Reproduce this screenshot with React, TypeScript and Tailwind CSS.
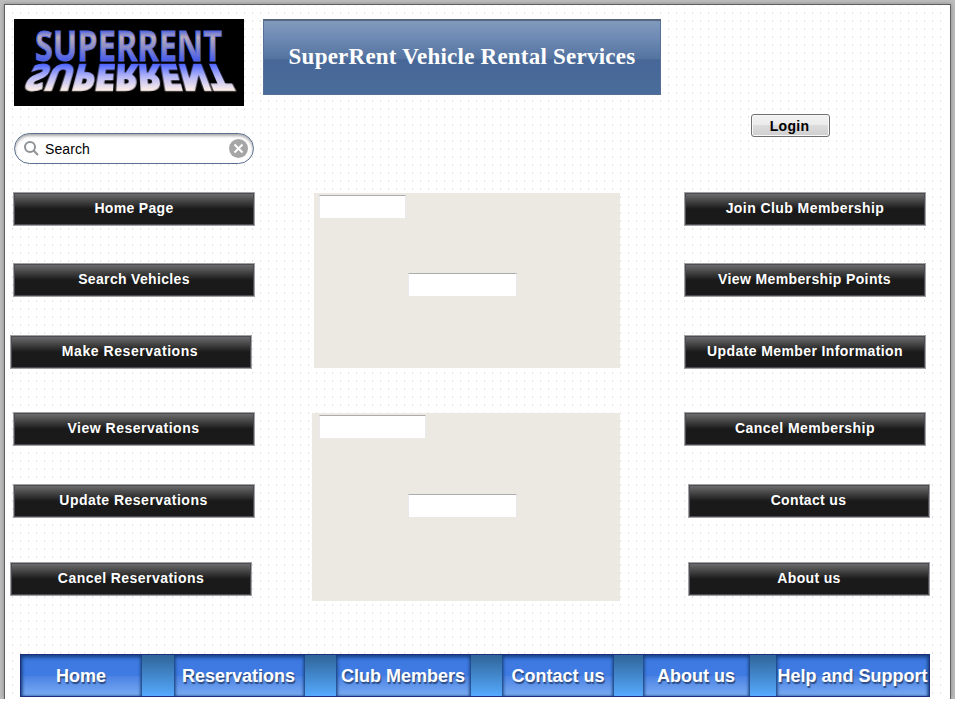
import React from "react";

type Item = { label: string; place: string };

const leftItems: Item[] = [
  { label: "Home Page", place: "mt-7 ml-2 tracking-[0.33px]" },
  { label: "Search Vehicles", place: "mt-[37px] ml-2 tracking-[0.33px]" },
  { label: "Make Reservations", place: "mt-[38px] ml-[5px] pr-[2px] tracking-[0.56px]" },
  { label: "View Reservations", place: "mt-[43px] ml-2 pr-[1px] tracking-[0.5px]" },
  { label: "Update Reservations", place: "mt-[38px] ml-2 pr-[1px] tracking-[0.48px]" },
  { label: "Cancel Reservations", place: "mt-11 ml-[5px] tracking-[0.45px]" },
];

const rightItems: Item[] = [
  { label: "Join Club Membership", place: "mt-[55px] tracking-[0.43px]" },
  { label: "View Membership Points", place: "pr-[1px] mt-[37px] tracking-[0.38px]" },
  { label: "Update Member Information", place: "mt-[38px] tracking-[0.4px]" },
  { label: "Cancel Membership", place: "mt-[43px] tracking-[0.45px]" },
  { label: "Contact us", place: "mt-[38px] ml-1 pr-[1px] tracking-[0.33px]" },
  { label: "About us", place: "mt-11 ml-1 tracking-[0.33px]" },
];

const navItems = [
  { label: "Home", box: "w-[121px] pr-[1px]", gap: "w-[32px]" },
  { label: "Reservations", box: "w-[131px] pr-[2px]", gap: "w-[31px]" },
  { label: "Club Members", box: "w-[135px] pr-[1px]", gap: "w-[31px]" },
  { label: "Contact us", box: "w-[112px]", gap: "w-[29px]" },
  { label: "About us", box: "w-[107px] pr-[1px]", gap: "w-[26px]" },
  { label: "Help and Support", box: "w-[153px]", gap: "w-0" },
];

function MenuButton({ label, place }: Item) {
  return (
    <button
      className={`${place} flex h-[34px] w-[242px] shrink-0 items-center justify-center border border-[#a0a0a5] bg-[linear-gradient(#707070_0px,#505050_6px,#353535_11px,#1a1a1a_16px,#1a1a1a_100%)] pb-[2px] text-[14px] font-bold whitespace-nowrap text-white shadow-[inset_0_0_0_1px_#4c4c52]`}
    >
      {label}
    </button>
  );
}

function Field({ className }: { className: string }) {
  return <div className={`${className} h-[23px] border-x border-t border-x-[#e8e8ee] border-t-[#acacac] bg-white`} />;
}

function Logo() {
  return (
    <div className="mt-[14px] ml-[9px] h-[87px] w-[230px] shrink-0 bg-black pt-3 pl-5">
      <svg className="block h-[31px] w-[190px] overflow-visible" viewBox="0 0 190 31">
        <defs>
          <linearGradient id="face" x1="0" y1="0" x2="0" y2="31" gradientUnits="userSpaceOnUse">
            <stop offset="0" stopColor="#5868e0" />
            <stop offset=".2" stopColor="#b9acb8" />
            <stop offset=".5" stopColor="#8f8fc4" />
            <stop offset="1" stopColor="#3f55f2" />
          </linearGradient>
        </defs>
        <text x="1" y="30" textLength="187" lengthAdjust="spacingAndGlyphs" fill="url(#face)" stroke="#5468dc" strokeWidth="1" fontFamily="'Open Sans', sans-serif" fontSize="41" fontWeight="700">
          SUPERRENT
        </text>
      </svg>
      {/* mirrored lettering that widens towards the viewer */}
      <svg
        className="mt-[2px] block h-[27px] w-[190px] origin-top overflow-visible [transform:matrix3d(1,0,0,0,0,.87,0,-.0047,0,0,1,0,0,0,0,1)]"
        viewBox="0 0 190 27"
      >
        <defs>
          <linearGradient id="mirror" x1="0" y1="27" x2="0" y2="0" gradientUnits="userSpaceOnUse">
            <stop offset="0" stopColor="#fff0e8" />
            <stop offset=".5" stopColor="#b3b5f6" />
            <stop offset="1" stopColor="#4c64ff" />
          </linearGradient>
        </defs>
        <g transform="matrix(1 0 0 -1 0 27)">
          <text x="1" y="26" textLength="187" lengthAdjust="spacingAndGlyphs" fill="url(#mirrorFill)" stroke="url(#mirrorFill)" strokeWidth="2.4" fontFamily="'Open Sans', sans-serif" fontSize="35" fontWeight="700">
            SUPERRENT
          </text>
          <linearGradient id="mirrorFill" x1="0" y1="27" x2="0" y2="0" gradientUnits="userSpaceOnUse">
            <stop offset="0" stopColor="#4c64ff" />
            <stop offset=".5" stopColor="#b3b5f6" />
            <stop offset="1" stopColor="#fff0e8" />
          </linearGradient>
        </g>
      </svg>
    </div>
  );
}

function SearchBox() {
  return (
    <div className="mt-[27px] ml-[9px] flex h-[31px] w-[240px] shrink-0 items-center rounded-full border border-[#5d7090] bg-white pr-[5px] pl-[9px] shadow-[inset_0_2px_3px_#a8a8a8]">
      <svg className="size-[15px]" viewBox="0 0 15 15" fill="none" stroke="#8f9296" strokeWidth="2">
        <circle cx="6" cy="6" r="5" />
        <path d="m9.5 9.5 4.5 4.5" />
      </svg>
      <span className="ml-[6px] flex-1 pt-[2px] text-[14px] tracking-[0.1px]">Search</span>
      <svg className="size-[19px]" viewBox="0 0 19 19">
        <circle cx="9.5" cy="9.5" r="9.5" fill="#a6a6a6" />
        <path d="m5.5 5.5 8 8m0-8-8 8" stroke="white" strokeWidth="2" />
      </svg>
    </div>
  );
}

export default function App() {
  return (
    <div className="h-[703px] w-[955px] overflow-hidden bg-white font-['Liberation_Sans',Arial,sans-serif] text-black">
      <div className="h-[699px] overflow-hidden bg-[#bdbdbd] pt-1 pl-1">
        <div className="h-[695px] w-[947px] border-x border-t border-[#606060] bg-white shadow-[0_0_4px_#888]">
          <div className="mr-[7px] flex h-full flex-col bg-[linear-gradient(to_bottom,transparent_2px,white_2px),linear-gradient(to_right,#e2e2e2_1px,white_1px)] bg-size-[8px_8px] bg-position-[7px_7px]">
            <div className="flex h-[649px] shrink-0">
              <aside className="flex w-[258px] shrink-0 flex-col">
                <Logo />
                <SearchBox />
                {leftItems.map((item) => (
                  <MenuButton key={item.label} {...item} />
                ))}
              </aside>
              <main className="flex w-[421px] shrink-0 flex-col">
                <h1 className="mt-[14px] flex h-[76px] w-[398px] shrink-0 items-center justify-center border border-t-2 border-[#566f95] border-t-[#566680] bg-[linear-gradient(#809abc_0%,#6f8bb6_22%,#54739f_52%,#466797_53%,#4a6c9b_100%)] pb-[1px] font-['Liberation_Serif',serif] text-[23px] font-bold tracking-[0.23px] whitespace-nowrap text-white">
                  SuperRent Vehicle Rental Services
                </h1>
                <section className="mt-[98px] ml-[51px] h-[175px] w-[306px] shrink-0 bg-[#ece9e2] pt-[2px]">
                  <Field className="ml-[5px] w-[87px]" />
                  <Field className="mt-[55px] ml-[94px] w-[109px]" />
                </section>
                <section className="mt-[45px] ml-[49px] h-[188px] w-[308px] shrink-0 bg-[#ece9e2] pt-[2px]">
                  <Field className="ml-[7px] w-[107px]" />
                  <Field className="mt-[56px] ml-[96px] w-[109px]" />
                </section>
              </main>
              <aside className="flex w-[246px] shrink-0 flex-col">
                <button className="mt-[109px] ml-[67px] flex h-[23px] w-[79px] shrink-0 items-center justify-center rounded-[3px] border border-[#707070] bg-[linear-gradient(#f2f2f2_0%,#ebebeb_48%,#dcdcdc_49%,#cfcfcf_100%)] pt-[2px] pr-[2px] text-[14px] font-bold tracking-[0.33px] shadow-[inset_0_0_0_1px_#f8f8f8]">
                  Login
                </button>
                {rightItems.map((item) => (
                  <MenuButton key={item.label} {...item} />
                ))}
              </aside>
            </div>
            <nav className="ml-[15px] flex h-[43px] w-[910px] shrink-0 border border-[#1b2e80] bg-[linear-gradient(#2f6497,#55aaff)]">
              {navItems.map((item) => (
                <React.Fragment key={item.label}>
                  <a
                    className={`${item.box} flex shrink-0 items-center justify-center bg-[linear-gradient(#3d79e0_0%,#3f7be3_50%,#4a82e4_51%,#7aabf2_100%)] pt-[2px] text-[18px] font-bold whitespace-nowrap text-white shadow-[inset_0_2px_4px_#123975,inset_2px_0_3px_-1px_#244f8c,inset_-2px_0_3px_-1px_#244f8c] [text-shadow:1px_2px_1px_#2b4a80]`}
                  >
                    {item.label}
                  </a>
                  <span className={`${item.gap} shrink-0`} />
                </React.Fragment>
              ))}
            </nav>
          </div>
        </div>
      </div>
    </div>
  );
}
